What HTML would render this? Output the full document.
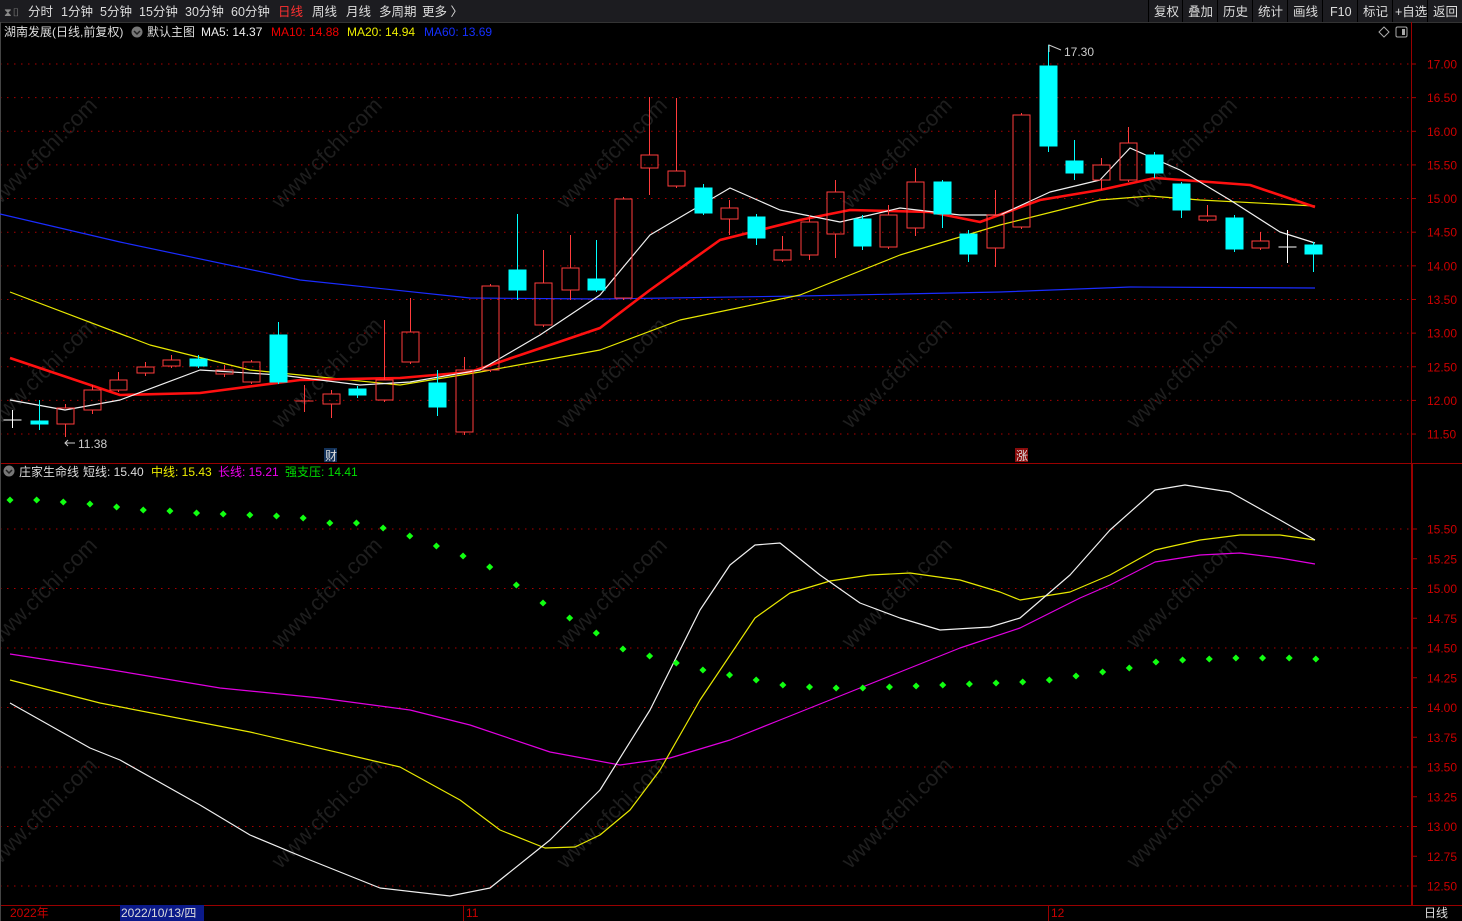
<!DOCTYPE html>
<html><head><meta charset="utf-8"><style>
html,body{margin:0;padding:0;background:#000;width:1462px;height:921px;overflow:hidden;font-family:"Liberation Sans","Noto Sans CJK SC",sans-serif}
svg{display:block}
</style></head><body>
<svg id="s" width="1462" height="921" xmlns="http://www.w3.org/2000/svg" font-family="Liberation Sans, Noto Sans CJK SC, sans-serif">
<rect width="1462" height="921" fill="#000"/>
<g id="wm" font-size="22" fill="#1e1e1e"></g>
<rect width="1462" height="22" fill="#1c1c20"/>
<line x1="0" y1="22.5" x2="1462" y2="22.5" stroke="#333"/>
<g font-size="12.5" fill="#ddd">
<text x="4" y="16" fill="#888" font-size="11">⧗▯</text>
<text x="28" y="16">分时</text><text x="61" y="16">1分钟</text><text x="100" y="16">5分钟</text><text x="139" y="16">15分钟</text><text x="185" y="16">30分钟</text><text x="231" y="16">60分钟</text>
<text x="278" y="16" fill="#ff3030">日线</text><text x="312" y="16">周线</text><text x="346" y="16">月线</text><text x="379" y="16">多周期</text><text x="422" y="16">更多 〉</text>
</g>
<g font-size="12.5" fill="#ddd">
<line x1="1148.5" y1="0" x2="1148.5" y2="22" stroke="#000"/><line x1="1182.5" y1="0" x2="1182.5" y2="22" stroke="#000"/><line x1="1217.5" y1="0" x2="1217.5" y2="22" stroke="#000"/><line x1="1252.5" y1="0" x2="1252.5" y2="22" stroke="#000"/><line x1="1287.5" y1="0" x2="1287.5" y2="22" stroke="#000"/><line x1="1322.5" y1="0" x2="1322.5" y2="22" stroke="#000"/><line x1="1357.5" y1="0" x2="1357.5" y2="22" stroke="#000"/><line x1="1392.5" y1="0" x2="1392.5" y2="22" stroke="#000"/><line x1="1427.5" y1="0" x2="1427.5" y2="22" stroke="#000"/>
<text x="1154" y="16">复权</text><text x="1188" y="16">叠加</text><text x="1223" y="16">历史</text><text x="1258" y="16">统计</text><text x="1293" y="16">画线</text><text x="1330" y="16">F10</text><text x="1363" y="16">标记</text><text x="1395" y="16">+自选</text><text x="1433" y="16">返回</text>
</g>
<g font-size="12">
<text x="4" y="36" fill="#ddd">湖南发展(日线,前复权)</text>
<circle cx="137" cy="32" r="5.5" fill="#777"/><path d="M134 31l3 3 3-3" stroke="#222" fill="none" stroke-width="1.5"/>
<text x="147" y="36" fill="#ddd">默认主图</text>
<text x="201" y="36" fill="#eee">MA5: 14.37</text>
<text x="271" y="36" fill="#e00">MA10: 14.88</text>
<text x="347" y="36" fill="#ee0">MA20: 14.94</text>
<text x="424" y="36" fill="#1530ff">MA60: 13.69</text>
</g>
<path d="M1384 27l5 5-5 5-5-5z" stroke="#aaa" fill="none"/>
<rect x="1396" y="27" width="11" height="10" rx="1.5" stroke="#aaa" fill="none"/><rect x="1402" y="29" width="3" height="6" fill="#aaa"/>
<g id="grid"></g>
<line x1="1411.5" y1="22" x2="1411.5" y2="905" stroke="#900"/>
<line x1="0" y1="463.5" x2="1462" y2="463.5" stroke="#900"/>
<rect x="1412" y="464" width="1" height="441" fill="#900"/>
<line x1="0" y1="905.5" x2="1462" y2="905.5" stroke="#900"/>
<line x1="0.5" y1="22" x2="0.5" y2="921" stroke="#444"/>
<g id="ma"></g>
<g id="c"></g>
<g id="low"></g>
<text x="1064" y="56" fill="#ccc" font-size="12">17.30</text><path d="M1049 52v-7l12 5" stroke="#ccc" fill="none"/>
<text x="78" y="448" fill="#ccc" font-size="12">11.38</text><path d="M75 443h-10M68 440l-3 3 3 3" stroke="#ccc" fill="none"/>
<rect x="324" y="448" width="13" height="14" fill="#13325a"/><text x="325" y="460" fill="#ddd" font-size="12">财</text>
<rect x="1015" y="448" width="13" height="14" fill="#8a0c0c"/><text x="1016" y="460" fill="#ddd" font-size="12">涨</text>
<g font-size="12">
<circle cx="9" cy="471" r="5.5" fill="#777"/><path d="M6 470l3 3 3-3" stroke="#222" fill="none" stroke-width="1.5"/>
<text x="19" y="476" fill="#ddd">庄家生命线</text>
<text x="83" y="476" fill="#ddd">短线: 15.40</text>
<text x="151" y="476" fill="#ee0">中线: 15.43</text>
<text x="218" y="476" fill="#e0e">长线: 15.21</text>
<text x="285" y="476" fill="#0d0">强支压: 14.41</text>
</g>
<g font-size="12">
<text x="10" y="917" fill="#c00">2022年</text>
<rect x="120" y="905" width="84" height="16" fill="#0b1a8a"/><text x="121" y="917" fill="#ddd">2022/10/13/四</text>
<line x1="463.5" y1="905" x2="463.5" y2="921" stroke="#900"/><text x="466" y="917" fill="#c00">11</text>
<line x1="1048.5" y1="905" x2="1048.5" y2="921" stroke="#900"/><text x="1051" y="917" fill="#c00">12</text>
<text x="1424" y="917" fill="#ddd">日线</text>
</g>
</svg>
<script>
var NS="http://www.w3.org/2000/svg";
function el(p,t,a,txt){var e=document.createElementNS(NS,t);for(var k in a)e.setAttribute(k,a[k]);if(txt)e.textContent=txt;document.getElementById(p).appendChild(e);return e;}
var wx=[45,330,615,900,1185],wy=[160,380,600,820];
for(var i=0;i<wx.length;i++)for(var j=0;j<wy.length;j++)el("wm","text",{x:wx[i]-70,y:wy[j],transform:"rotate(-45 "+wx[i]+" "+wy[j]+")"},"www.cfchi.com");
var up=["17.00","16.50","16.00","15.50","15.00","14.50","14.00","13.50","13.00","12.50","12.00","11.50"];
for(var i=0;i<12;i++){var y=64+i*33.64;el("grid","line",{x1:0,y1:y,x2:1411,y2:y,stroke:"#a00","stroke-dasharray":"1.5 5.5"});el("grid","line",{x1:1411,y1:y,x2:1416,y2:y,stroke:"#a00"});el("grid","text",{x:1427,y:y+4.5,fill:"#c00","font-size":"12"},up[i]);}
var lo=["15.50","15.25","15.00","14.75","14.50","14.25","14.00","13.75","13.50","13.25","13.00","12.75","12.50"];
for(var i=0;i<13;i++){var y=529+i*29.75;if(i%2==0)el("grid","line",{x1:0,y1:y,x2:1411,y2:y,stroke:"#a00","stroke-dasharray":"1.5 5.5"});el("grid","line",{x1:1412,y1:y,x2:1417,y2:y,stroke:"#a00"});el("grid","text",{x:1427,y:y+4.5,fill:"#c00","font-size":"12"},lo[i]);}
function pl(g,pts,c,w){el(g,"polyline",{points:pts,stroke:c,"stroke-width":w,fill:"none","stroke-linejoin":"round"});}
pl("ma","0,214 120,242 300,280 470,298 600,299 800,296 1000,292 1130,287 1315,288","#1a2cff",1.2);
pl("ma","10,292 150,345 250,370 400,385 480,372 600,350 680,320 800,295 900,255 1000,225 1100,200 1150,196 1200,200 1315,206","#e8e800",1.2);
pl("ma","10,358 120,395 200,393 300,380 400,378 470,372 550,345 600,328 650,290 720,240 800,220 850,210 930,212 980,222 1040,200 1100,190 1155,178 1250,185 1315,207","#ff1010",2.6);
pl("ma","10,400 65,410 120,400 200,370 280,375 360,385 410,382 480,370 540,335 600,295 650,235 730,188 780,210 840,222 900,208 960,215 1000,215 1050,192 1100,180 1130,148 1180,170 1230,200 1280,232 1315,243","#f0f0f0",1.2);
var C=[["w",420,420,410,428],["c",421,424,400,430],["r",408,424,404,437],["r",390,410,385,414],["r",380,390,372,392],["r",367,373,362,376],["r",360,366,355,368],["c",359,366,355,368],["r",370,374,365,377],["r",362,382,360,384],["c",335,382,322,384],["r",401,401,385,412],["r",394,404,390,418],["c",389,395,386,398],["r",380,400,320,402],["r",332,362,298,364],["c",383,407,370,416],["r",370,432,357,435],["r",286,370,284,372],["c",270,290,214,300],["r",283,325,250,327],["r",268,290,235,300],["c",279,290,240,292],["r",199,298,197,300],["r",155,168,97,195],["r",171,186,98,188],["c",188,213,184,215],["r",208,219,200,235],["c",217,238,214,245],["r",250,260,236,262],["r",222,255,215,260],["r",192,234,180,258],["c",219,246,215,250],["r",215,247,205,249],["r",182,228,168,236],["c",182,214,180,228],["c",234,254,230,262],["r",215,248,190,267],["r",115,227,113,229],["c",66,146,45,152],["c",161,173,140,180],["r",165,180,158,190],["r",143,180,127,182],["c",155,173,152,178],["c",184,210,182,218],["r",216,220,205,222],["c",218,249,215,252],["r",241,248,232,250],["w",247,247,230,263],["c",245,254,242,272]];
for(var i=0;i<C.length;i++){var x=Math.round(12+i*26.56)+0.5,d=C[i],col=d[0]=="r"?"#ff3c3c":d[0]=="c"?"#00ffff":"#fff";
el("c","line",{x1:x,y1:d[3],x2:x,y2:d[1],stroke:col});el("c","line",{x1:x,y1:d[2],x2:x,y2:d[4],stroke:col});
if(d[2]-d[1]<2){el("c","line",{x1:x-9,y1:d[1],x2:x+9,y2:d[1],stroke:col,"stroke-width":d[0]=="c"?3:1});}
else if(d[0]=="r")el("c","rect",{x:x-8.5,y:d[1],width:17,height:d[2]-d[1],stroke:col,fill:"none"});
else el("c","rect",{x:x-9,y:d[1]-0.5,width:18,height:d[2]-d[1]+1,fill:col});}
pl("low","10,654 100,668 220,688 320,698 410,710 470,725 550,752 620,765 670,758 730,740 780,720 840,696 900,672 960,648 1020,628 1080,598 1110,585 1155,562 1200,555 1240,553 1280,558 1315,564","#e000e0",1.2);
pl("low","10,680 100,703 250,732 400,767 460,800 500,830 545,848 575,847 600,835 630,810 660,770 700,700 755,618 790,593 830,581 870,575 910,573 960,580 1000,592 1020,600 1070,592 1110,575 1155,550 1200,540 1240,535 1280,535 1315,540","#e8e800",1.2);
pl("low","10,703 90,748 120,760 200,805 250,835 310,860 380,888 450,896 490,888 550,840 600,790 650,710 700,610 730,565 755,545 780,543 820,575 860,603 900,618 940,630 990,627 1020,618 1070,575 1110,530 1155,490 1185,485 1230,492 1280,520 1315,540","#f0f0f0",1.2);
var G=[500,500,502,504,507,510,511,513,514,515,516,518,523,523,528,536,546,556,567,585,603,618,633,649,656,663,670,675,680,685,687,688,688,687,686,685,684,683,682,680,676,672,668,662,660,659,658,658,658,659];
for(var i=0;i<G.length;i++){var x=10+i*26.65;el("low","rect",{x:x-2.5,y:G[i]-2.5,width:5,height:5,fill:"#11ff11",transform:"rotate(45 "+x+" "+G[i]+")"});}
</script>
</body></html>
